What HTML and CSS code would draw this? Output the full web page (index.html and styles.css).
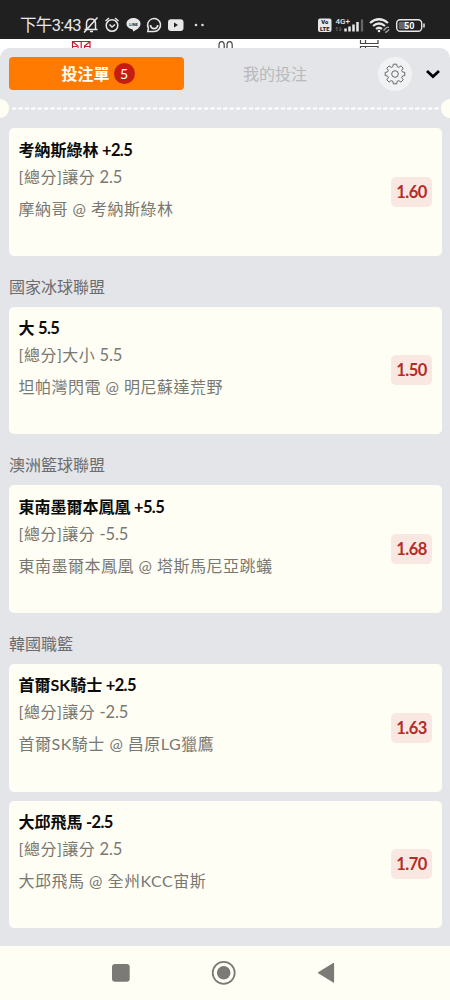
FILE: index.html
```html
<!DOCTYPE html>
<html lang="zh-Hant">
<head>
<meta charset="utf-8">
<title>投注單</title>
<link rel="stylesheet" href="styles.css">
</head>
<body>
<div class="screen">
  <header class="status">
    <span class="clock">下午3:43</span>
    <svg class="status-left" width="124" height="20" viewBox="0 0 124 20" fill="none" stroke="#e8e8e8" stroke-width="1.500">
      <path d="M1.500 14.500h13M3.500 14V8.500Q3.500 4 8 4T12.500 8.500V14M1 17.500 14.500 2.500M7 16.500h3"/>
      <circle cx="29" cy="10.500" r="5.800"/><path d="M22.500 6 26 3M35.500 6 32 3M26.500 9.500l2.500 2.500 3-2.500"/>
      <path d="M50.500 3c-4 0-7 2.500-7 5.800 0 3.200 3 5 6 5.600.8.200.3 1.600.6 2.200 3-1.200 7.400-4 7.400-7.800 0-3.300-3-5.800-7-5.800z" fill="#e8e8e8" stroke="none"/>
      <text x="50.500" y="10.800" class="line-label">LINE</text>
      <path d="M64.800 16.500h6.200a6.500 6.500 0 1 0-5.600-3.300z"/><path d="M67.500 10a3.600 3.600 0 0 0 7.200 0" stroke-width="1.800"/>
      <rect x="85" y="4.300" width="15.500" height="11.700" rx="3" fill="#e8e8e8" stroke="none"/><path d="M91 7.500v5l4-2.500z" fill="#222" stroke="none"/>
      <circle cx="113" cy="10" r="1.300" fill="#ddd" stroke="none"/><circle cx="119.500" cy="10" r="1.300" fill="#ddd" stroke="none"/>
    </svg>
    <svg class="status-right" width="109" height="20" viewBox="0 0 109 20" fill="none" stroke="#e8e8e8">
      <rect x="1" y="3.500" width="13.500" height="13.500" rx="2" fill="#e8e8e8" stroke="none"/>
      <text x="7.700" y="9.300" class="volte">Vo</text><text x="7.700" y="15.600" class="volte">LTE</text>
      <text x="18.500" y="8.800" class="network">4G+</text>
      <path d="M20 16v-4l-1.300 1.500M23 12v4l1.300-1.500" stroke="#777" stroke-width=".8"/>
      <path d="M28.500 13.500V16.500M32.500 11.500v5M36.500 9.500v7M40.500 7v9.500" stroke-width="2.500"/><path d="M45 4.500v12" stroke="#666" stroke-width="2.300"/>
      <path d="M53 8q9-7.500 18 0M56 11q6-5 12 0M59 14q3-2.500 6 0" stroke-width="2.200"/><circle cx="62" cy="16" r="1.300" fill="#e8e8e8" stroke="none"/>
      <path d="M66.500 15.500l3-3q1.600-1 2.300.3M68 17q1 .5 2-.5l2.200-2.200" stroke="#aaa" stroke-width="1.200"/>
      <rect x="79.700" y="4.700" width="25" height="11.600" rx="3.500" stroke-width="1.400"/><rect x="81.700" y="6.700" width="10" height="7.600" rx="1.500" fill="#666" stroke="none"/>
      <path d="M107 8.500v4" stroke-width="1.500"/><text x="92.200" y="13.700" class="battery">50</text>
    </svg>
  </header>
  <div class="behind">
    <svg width="450" height="9" viewBox="0 0 450 9" fill="none" stroke="#444" stroke-width="1.200">
      <path d="M72.500 9V2.500h17.500V9M81.200 2v7M73 3l5 4v2M89.500 3l-5 4v2M73 7.500h4M85 7.500h5" stroke="#b9202f"/>
      <path d="M219 9V6.200a2.600 3.500 0 0 1 5.200 0V9M227 9V6.200a2.600 3.500 0 0 1 5.200 0V9"/>
      <path d="M360.500 1v3.500h17.500V1M365.500 1v3.500M360.500 9V7.500h17.500v1.500M365.500 7.500v1.500"/>
    </svg>
  </div>
  <main class="panel">
    <div class="tabs">
      <div class="tab active">投注單<span class="count">5</span></div>
      <div class="tab">我的投注</div>
      <div class="gear">
        <svg width="22" height="22" viewBox="0 0 22 22" fill="none" stroke="#666" stroke-width="1">
          <circle cx="11" cy="11" r="3.300"/>
          <path d="M9.300 1.200h3.400l.5 2.500 1.500.7 2.200-1.500 2.300 2.300-1.500 2.200.7 1.500 2.400.5v3.200l-2.400.5-.7 1.500 1.500 2.200-2.300 2.300-2.200-1.500-1.500.7-.5 2.500H9.300l-.5-2.500-1.500-.7-2.200 1.500-2.300-2.300 1.500-2.200-.7-1.500-2.400-.5V9.400l2.400-.5.7-1.500-1.500-2.200 2.300-2.300 2.200 1.500 1.500-.7z" stroke-linejoin="round"/>
        </svg>
      </div>
      <svg class="chevron" width="14" height="10" viewBox="0 0 14 10" fill="none" stroke="#000" stroke-width="2.700"><path d="M1 2l6 5.600L13 2"/></svg>
    </div>
    <div class="tear">
      <span class="notch"></span>
      <svg class="dashes" width="432" height="3" viewBox="0 0 432 3"><path d="M3 1.500H430" stroke="#fff" stroke-width="2.200" stroke-dasharray="4.200 2.200"/></svg>
      <span class="notch right"></span>
    </div>
    <div class="bets">
      <article class="card"><div><h3>考納斯綠林<span class="num"> +2.5</span></h3><p class="market">[總分]讓分<span class="num"> 2.5</span></p><p class="match">摩納哥 @ 考納斯綠林</p></div><span class="odds">1.60</span></article>
      <h2>國家冰球聯盟</h2>
      <article class="card"><div><h3>大<span class="num"> 5.5</span></h3><p class="market">[總分]大小<span class="num"> 5.5</span></p><p class="match">坦帕灣閃電 @ 明尼蘇達荒野</p></div><span class="odds">1.50</span></article>
      <h2>澳洲籃球聯盟</h2>
      <article class="card"><div><h3>東南墨爾本鳳凰<span class="num"> +5.5</span></h3><p class="market">[總分]讓分<span class="num"> -5.5</span></p><p class="match">東南墨爾本鳳凰 @ 塔斯馬尼亞跳蟻</p></div><span class="odds">1.68</span></article>
      <h2>韓國職籃</h2>
      <article class="card"><div><h3>首爾SK騎士<span class="num"> +2.5</span></h3><p class="market">[總分]讓分<span class="num"> -2.5</span></p><p class="match">首爾SK騎士 @ 昌原LG獵鷹</p></div><span class="odds">1.63</span></article>
      <article class="card next"><div><h3>大邱飛馬<span class="num"> -2.5</span></h3><p class="market">[總分]讓分<span class="num"> 2.5</span></p><p class="match">大邱飛馬 @ 全州KCC宙斯</p></div><span class="odds">1.70</span></article>
    </div>
  </main>
  <nav class="system-nav">
    <svg width="450" height="54" viewBox="0 0 450 54" fill="#7b7a76">
      <rect x="112" y="18" width="17.700" height="17.700" rx="3"/>
      <circle cx="223.700" cy="26.800" r="11" fill="none" stroke="#7b7a76" stroke-width="1.800"/><circle cx="223.700" cy="26.800" r="6.800"/>
      <path d="M318.500 26.800 333.500 17.500v18.600z" stroke="#7b7a76" stroke-width="1.200" stroke-linejoin="round"/>
    </svg>
  </nav>
</div>
</body>
</html>
```
FILE: styles.css
```css
* { box-sizing: border-box; margin: 0; padding: 0; }
body { font-family: Lato, "Noto Sans CJK TC", sans-serif; font-size: 16px; background: #fff; }
svg { display: block; }
.screen { width: 450px; height: 1000px; display: flex; flex-direction: column; overflow: hidden; }
.status { height: 39px; flex: none; display: flex; align-items: flex-start; padding: 15px 24px 0 20px; background: #202020; color: #e8e8e8; }
.clock { width: 63px; padding-top: 1px; font: 400 16.5px/20px Roboto, "Noto Sans CJK TC", sans-serif; letter-spacing: -.65px; white-space: nowrap; }
.status-left { flex: none; }
.status-right { flex: none; margin-left: auto; }
.line-label { font: 700 4px Roboto, sans-serif; fill: #222; stroke: none; text-anchor: middle; }
.volte { font: 900 5.8px Roboto, sans-serif; fill: #202020; stroke: none; text-anchor: middle; }
.network { font: 500 8px Roboto, sans-serif; fill: #e8e8e8; stroke: none; }
.battery { font: 700 9px Roboto, sans-serif; fill: #fff; stroke: none; text-anchor: middle; }
.behind { height: 9px; flex: none; background: #fff; }
.panel { height: 898px; flex: none; background: #e4e5e8; border-radius: 10px 10px 0 0; }
.tabs { height: 51px; display: flex; align-items: center; padding: 0 10px 0 9px; }
.tab { width: 175px; height: 33px; display: flex; align-items: center; justify-content: center; color: #b8b9bb; border-radius: 4px; padding: 0 0 1px 7px; }
.tab.active { background: #ff7a00; color: #fffef5; font-weight: 700; padding: 0 0 1px 3px; }
.count { width: 21px; height: 21px; margin-left: 4px; border-radius: 50%; background: #c41e12; font-size: 14px; font-weight: 400; line-height: 21px; text-align: center; }
.gear { width: 34px; height: 34px; margin-left: 19px; border-radius: 50%; background: #f1f2f4; display: flex; align-items: center; justify-content: center; }
.chevron { margin-left: 14px; }
.tear { height: 19px; display: flex; align-items: center; justify-content: space-between; overflow: hidden; }
.notch { width: 9px; height: 19px; flex: none; background: #fffef3; border-radius: 0 10px 10px 0; }
.notch.right { border-radius: 10px 0 0 10px; }
.bets { padding: 10px 8.5px 0 9px; }
.card { height: 127.8px; display: flex; justify-content: space-between; align-items: center; padding: 0 9.5px; background: #fffef5; border-radius: 5px; }
.card > div { align-self: flex-start; padding-top: 9.5px; }
.card.next { margin-top: 9px; }
h3 { font-size: 16px; line-height: 24px; color: #0b0b0b; }
h3 .num { font-size: 16.5px; letter-spacing: -.6px; line-height: 1; }
.market, .match { color: #787873; letter-spacing: .5px; line-height: 24px; }
.market .num { font-size: 16.5px; letter-spacing: -.1px; line-height: 1; }
.market { margin-top: 3px; }
.match { margin-top: 8px; }
h2 { font-size: 16px; font-weight: 400; line-height: 24px; height: 50.8px; padding-top: 19px; color: #6b6c6f; }
.odds { width: 41px; height: 30px; border-radius: 5px; background: #f8e8e1; color: #b42b27; font-size: 16.5px; font-weight: 700; letter-spacing: -.5px; line-height: 30px; text-align: center; }
.system-nav { height: 54px; flex: none; background: #fffef5; }
```
